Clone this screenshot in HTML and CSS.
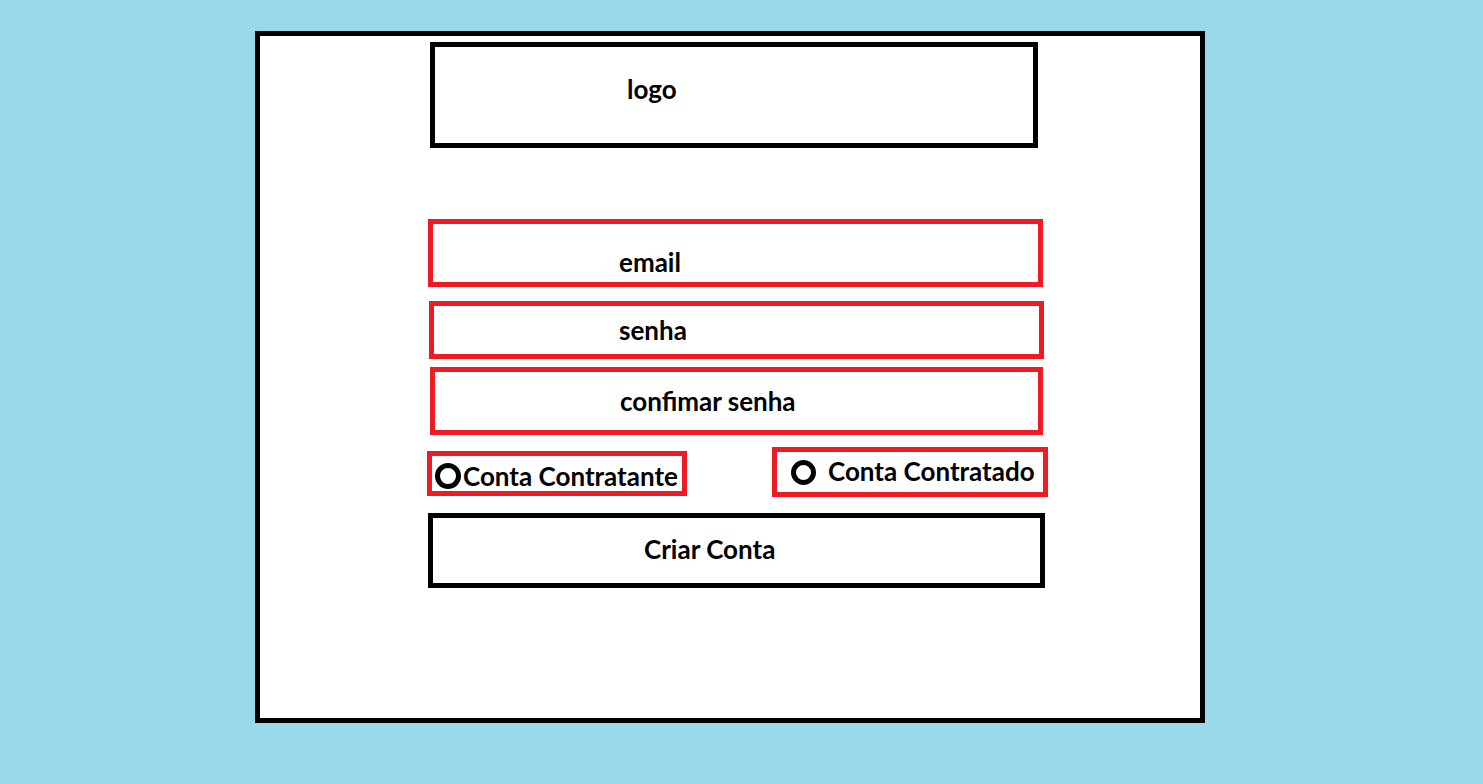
FILE: index.html
```html
<!DOCTYPE html>
<html lang="pt">
<head>
<meta charset="utf-8">
<title>Criar Conta</title>
<link rel="stylesheet" href="styles.css">
</head>
<body>
<div class="frame">
  <div class="box logo"><span class="label">logo</span></div>
  <div class="box field email"><span class="label">email</span></div>
  <div class="box field senha"><span class="label">senha</span></div>
  <div class="box field confirm"><span class="label">confimar senha</span></div>
  <div class="radio-row">
    <div class="radio radio-left"><span class="circle"></span><span class="label">Conta Contratante</span></div>
    <div class="radio radio-right"><span class="circle"></span><span class="label">Conta Contratado</span></div>
  </div>
  <div class="box button"><span class="label">Criar Conta</span></div>
</div>
</body>
</html>
```

FILE: styles.css
```css
html, body {
  margin: 0;
  padding: 0;
}
body {
  background: #99d9ea;
  width: 1483px;
  height: 784px;
  overflow: hidden;
  font-family: Lato, "Open Sans", sans-serif;
  font-weight: 700;
  font-size: 26px;
  line-height: 26px;
  color: #000;
}
.frame {
  box-sizing: border-box;
  margin: 31px 0 0 255px;
  width: 950px;
  height: 692px;
  background: #fff;
  border: 5px solid #000;
  display: flex;
  flex-direction: column;
  align-items: flex-start;
}
.box {
  box-sizing: border-box;
  border: 5px solid #000;
}
.label {
  display: block;
  white-space: nowrap;
}
.logo {
  margin: 6px 0 0 170px;
  width: 608px;
  height: 106px;
  padding: 29px 0 0 192px;
}
.field {
  border-color: #ed1c24;
}
.email {
  margin: 71px 0 0 168px;
  width: 615px;
  height: 68px;
  padding: 25px 0 0 186px;
}
.senha {
  margin: 14px 0 0 169px;
  width: 615px;
  height: 58px;
  padding: 11px 0 0 185px;
}
.confirm {
  margin: 8px 0 0 170px;
  width: 613px;
  height: 68px;
  padding: 16px 0 0 185px;
}
.radio-row {
  display: flex;
  align-items: flex-start;
  margin-top: 12px;
}
.radio {
  box-sizing: border-box;
  border: 5px solid #ed1c24;
  display: flex;
  align-items: flex-start;
}
.circle {
  box-sizing: border-box;
  display: block;
  border: 5px solid #000;
  border-radius: 50%;
  flex: none;
}
.radio-left {
  margin: 4px 0 0 167px;
  width: 260px;
  height: 45px;
  padding-left: 3px;
}
.radio-left .circle {
  width: 26px;
  height: 26px;
  margin-top: 7px;
}
.radio-left .label {
  margin: 7px 0 0 2px;
}
.radio-right {
  margin-left: 85px;
  width: 276px;
  height: 50px;
  padding-left: 14px;
}
.radio-right .circle {
  width: 25px;
  height: 25px;
  margin-top: 8px;
}
.radio-right .label {
  margin: 6px 0 0 12px;
}
.button {
  margin: 16px 0 0 168px;
  width: 617px;
  height: 75px;
  padding: 18px 0 0 211px;
}
```
